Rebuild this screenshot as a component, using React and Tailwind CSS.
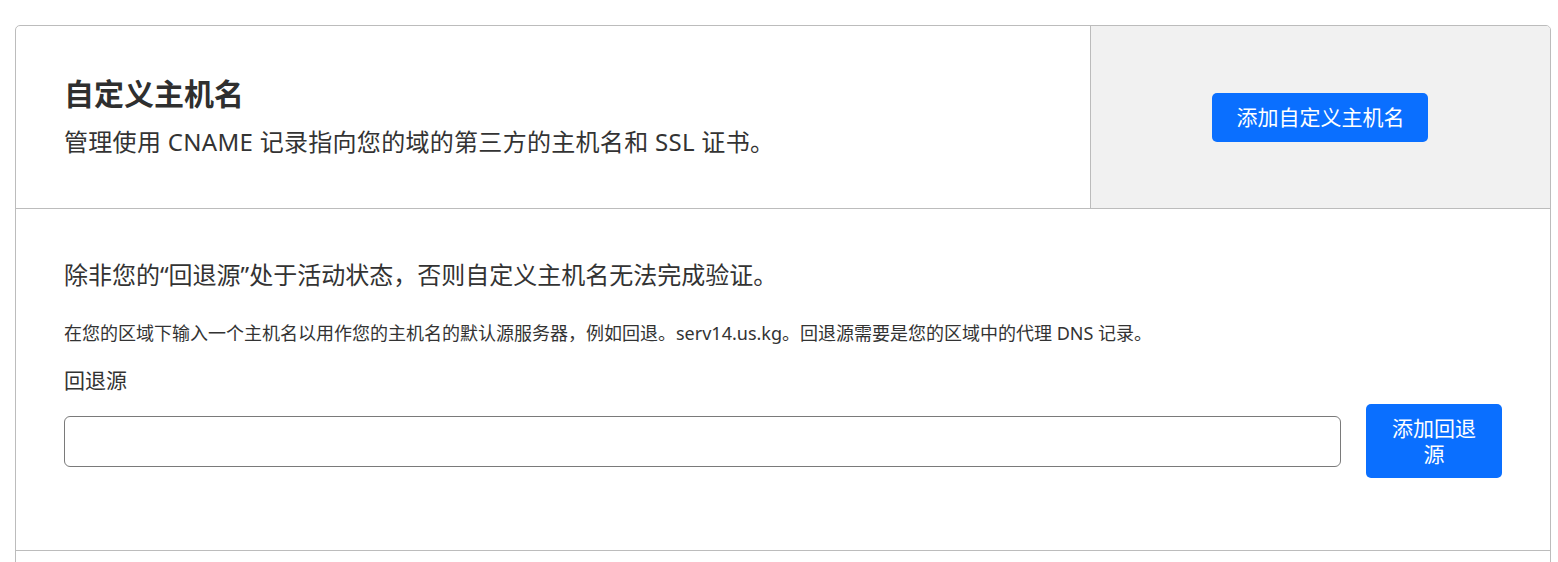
export default function App() {
  return (
    <div
      className="min-h-screen bg-white pl-[15px] pt-[25px] text-[#333]"
      style={{ fontFamily: '"Noto Sans", "Noto Sans CJK SC", sans-serif' }}
    >
      <div className="w-[1536px] overflow-hidden rounded-[5px] border border-[#bcbcbc]">
        {/* header */}
        <div className="flex h-[183px] border-b border-[#bcbcbc]">
          <div className="flex w-[70%] flex-col justify-center px-[48px] pb-[2px]">
            <h2 className="text-[30px] font-bold leading-[40px] text-[#2f2f2f]">自定义主机名</h2>
            <p className="mt-[11px] text-[24px] leading-[34px] tracking-[0.3px]">
              管理使用 CNAME 记录指向您的域的第三方的主机名和 SSL 证书。
            </p>
          </div>
          <div className="flex flex-1 items-center justify-center border-l border-[#bcbcbc] bg-[#f1f1f1]">
            <button className="rounded-[5px] bg-[#0a6fff] px-[24px] py-[11.5px] text-[21px] leading-[26px] text-white">
              添加自定义主机名
            </button>
          </div>
        </div>

        {/* fallback origin */}
        <div className="px-[48px] pb-[72px] pt-[48px]">
          <p className="text-[24px] leading-[36px]">除非您的“回退源”处于活动状态，否则自定义主机名无法完成验证。</p>
          <p className="mt-[27px] text-[18px] leading-[26px]">
            在您的区域下输入一个主机名以用作您的主机名的默认源服务器，例如回退。serv14.us.kg。回退源需要是您的区域中的代理 DNS 记录。
          </p>
          <label className="mt-[20px] block text-[21px] leading-[28px]">回退源</label>
          <div className="mt-[10px] flex items-center gap-[25px]">
            <input className="h-[51px] flex-1 rounded-[6px] border border-[#7a7a7a] px-3 text-[18px] outline-none" />
            <button className="w-[136px] rounded-[5px] bg-[#0a6fff] px-[24px] py-[11px] text-[21px] leading-[26px] text-white">
              添加回退源
            </button>
          </div>
        </div>

        <div className="h-[120px] border-t border-[#bcbcbc]" />
      </div>
    </div>
  )
}
